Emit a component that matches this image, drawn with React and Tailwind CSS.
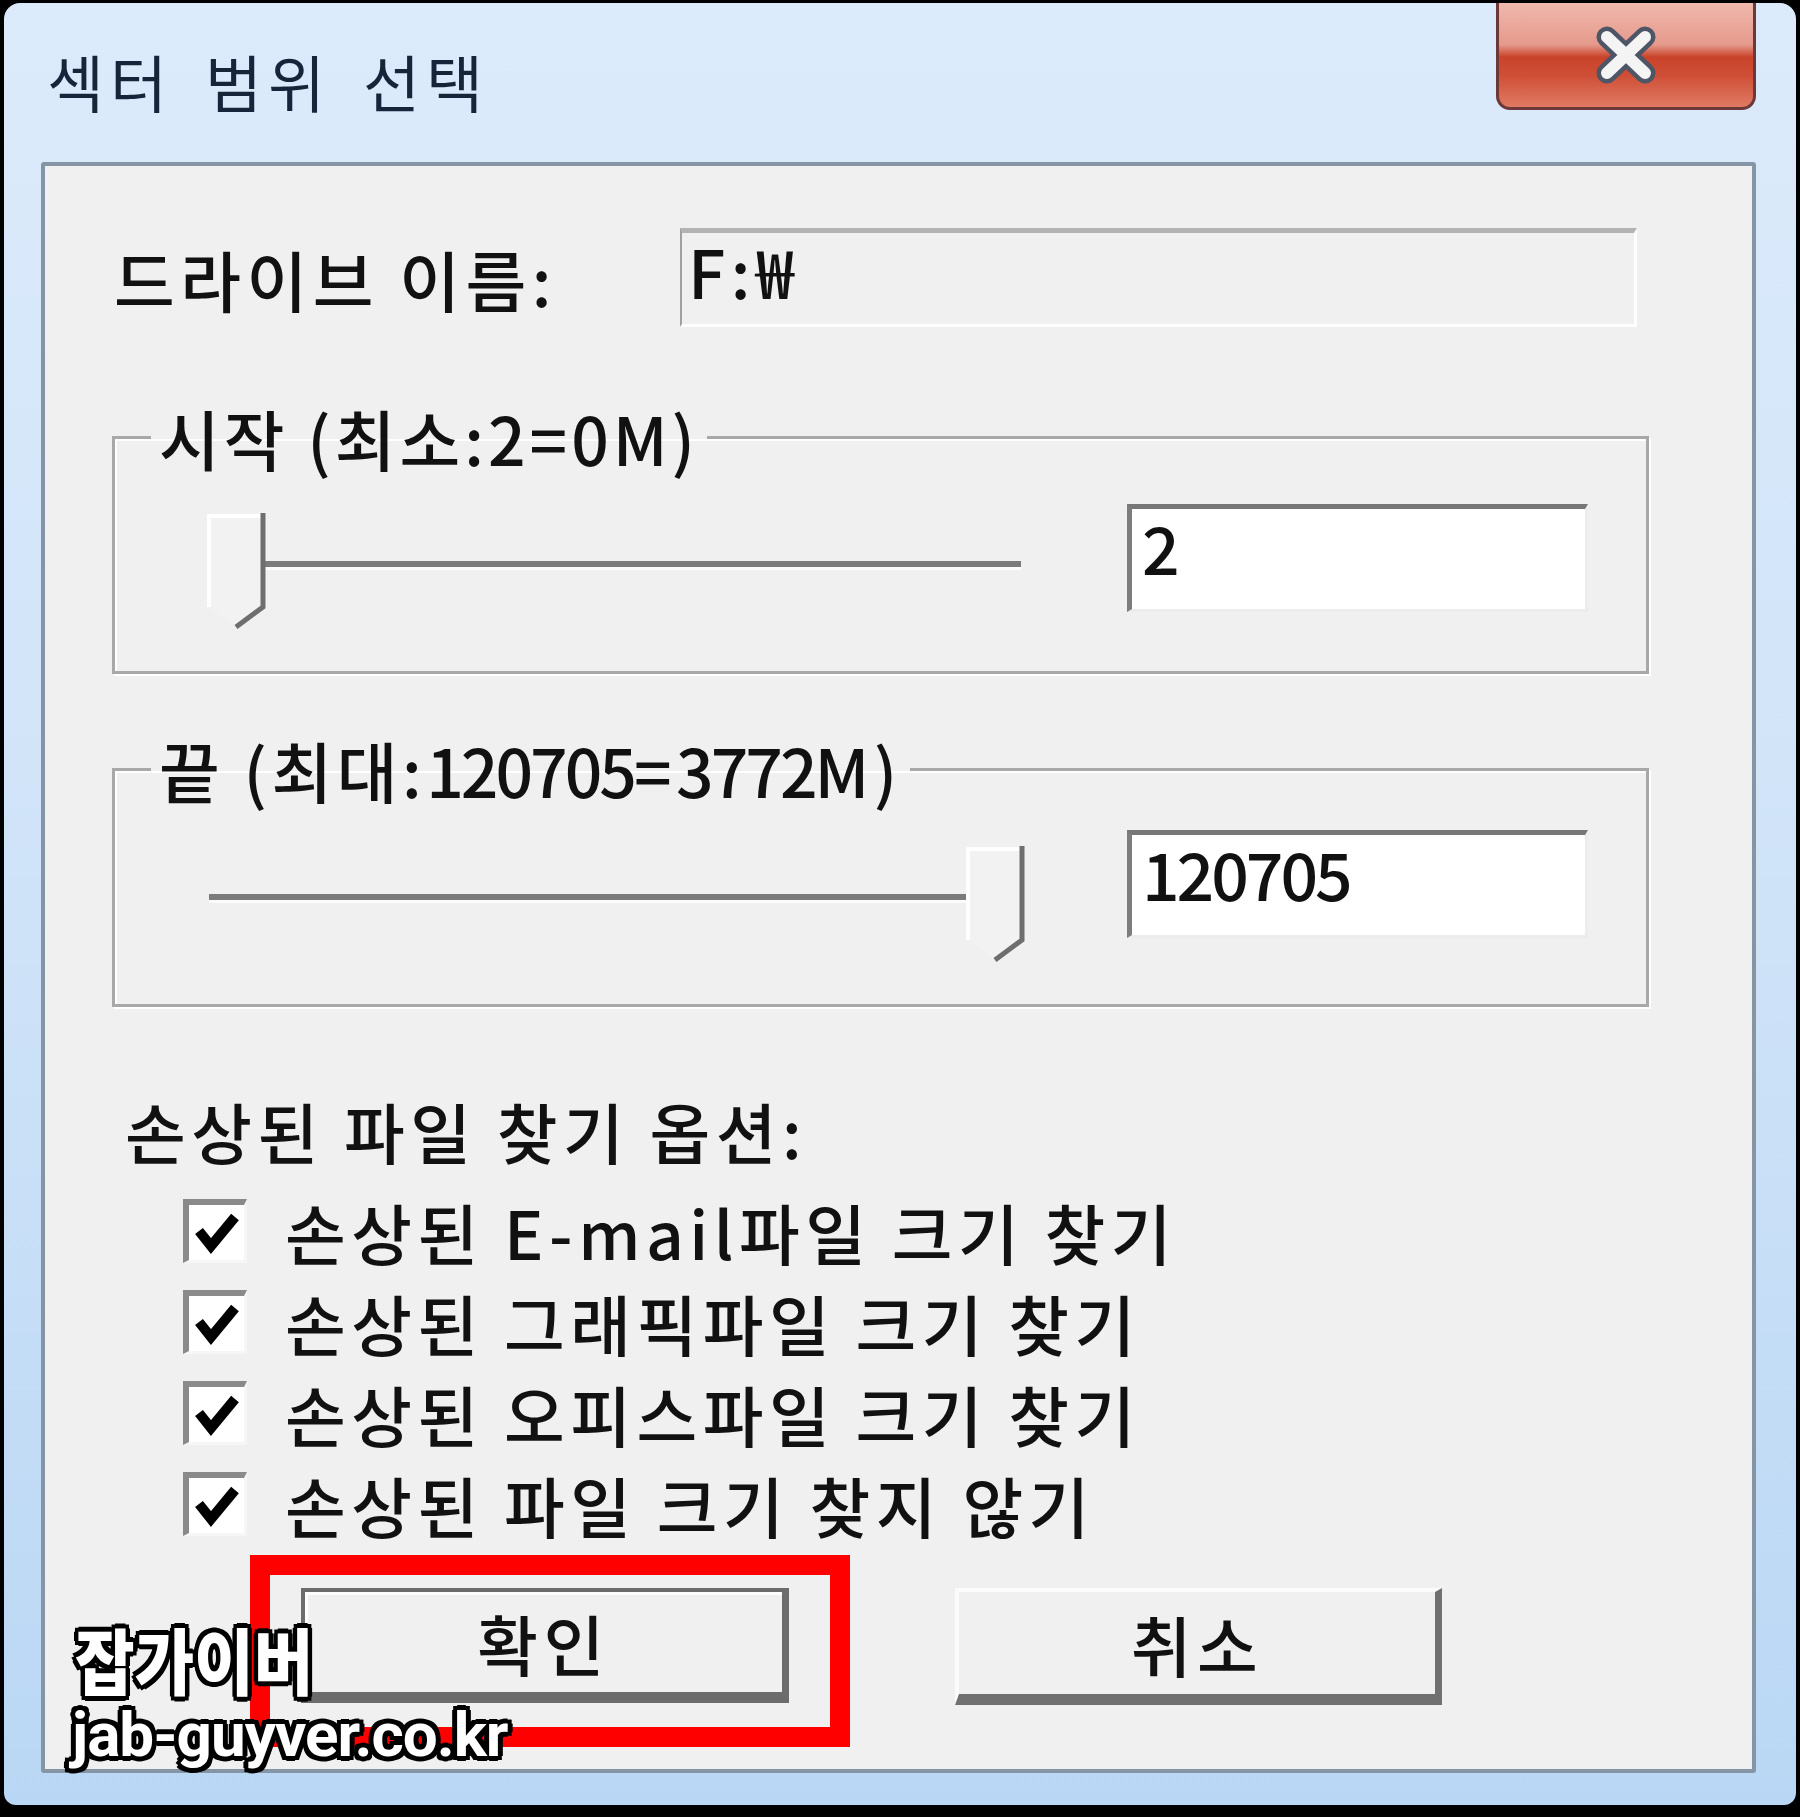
import React from 'react';

// Windows 7 style "섹터 범위 선택" dialog, scaled up

function Num({ children }) {
    return <span className="tracking-[-3px]">{children}</span>;
}

function Slider({ thumbClass }) {
    return (
        <div className="relative w-[820px] h-[116px] shrink-0">
            <div className="absolute left-[3px] top-[48px] w-[812px] h-[6px] bg-[#7b7b7b] shadow-[0_3px_0_#fbfbfb]" />
            <svg className={`absolute top-0 ${thumbClass}`} width="62" height="116" viewBox="0 0 62 116">
                <polygon points="3,3 57,3 57,94 30,113 3,94" fill="#f2f2f2" />
                <polyline points="3,94 3,3 57,3" fill="none" stroke="#ffffff" strokeWidth="4" />
                <polyline points="57,0 57,94 30,114" fill="none" stroke="#6e6e6e" strokeWidth="5" />
            </svg>
        </div>
    );
}

function ValueBox({ value }) {
    return (
        <div className="w-[461px] h-[108px] shrink-0 bg-white border-t-[5px] border-l-[5px] border-t-[#777777] border-l-[#7d7d7d] border-r-[3px] border-b-[3px] border-r-[#ececec] border-b-[#ececec] pl-[10px] pt-[2px] leading-[70px] tracking-[-3px]">
            {value}
        </div>
    );
}

function CheckRow({ label }) {
    return (
        <div className="h-[91px] flex items-center">
            <div className="w-[64px] h-[64px] shrink-0 bg-white border-t-[6px] border-l-[6px] border-t-[#8a8a8a] border-l-[#8a8a8a] border-r-[3px] border-b-[3px] border-r-[#f6f6f6] border-b-[#f6f6f6] flex items-center justify-center">
                <svg width="46" height="46" viewBox="0 0 46 46">
                    <path d="M5 22 L17 37 L41 8" fill="none" stroke="#000" strokeWidth="10" strokeLinejoin="miter" />
                </svg>
            </div>
            <span className="ml-[38px] leading-[70px]">{label}</span>
        </div>
    );
}

export default function App() {
    const options = [
        '손상된 E-mail파일 크기 찾기',
        '손상된 그래픽파일 크기 찾기',
        '손상된 오피스파일 크기 찾기',
        '손상된 파일 크기 찾지 않기',
    ];

    return (
        <div className="relative w-[1800px] h-[1817px] bg-black pt-[3px] px-[4px] pb-[12px] font-['Noto_Sans_CJK_KR',sans-serif] text-[#111]">
            <div className="h-full rounded-t-[16px] rounded-b-[12px] bg-gradient-to-b from-[#dcebfb] via-[#cfe3f8] to-[#b9d7f4] flex flex-col pl-[37px] pr-[40px] pb-[32px]">
                {/* title bar */}
                <div className="h-[159px] shrink-0 flex items-start justify-between">
                    <div className="mt-[47px] ml-[6px] text-[62px] leading-[62px] text-[#17253a] tracking-[6px] [word-spacing:12px]">
                        섹터 범위 선택
                    </div>
                    <div className="relative w-[260px] h-[107px] rounded-b-[14px] border-[3px] border-t-0 border-[#6b3a38] bg-[linear-gradient(to_bottom,#f0b8ac_0%,#e59a8c_40%,#c9432b_52%,#cf4f36_70%,#e07a64_100%)] flex items-center justify-center">
                        <svg width="70" height="60" viewBox="0 0 70 60">
                            <path d="M16 12 L54 48 M54 12 L16 48" stroke="#4d5566" strokeWidth="21" strokeLinecap="round" />
                            <path d="M16 12 L54 48 M54 12 L16 48" stroke="#f4f4f4" strokeWidth="12" strokeLinecap="round" />
                        </svg>
                    </div>
                </div>

                {/* client area */}
                <div className="flex-1 border-[4px] border-[#8595a6] rounded-[3px] bg-[#f0f0f0] flex flex-col text-[66px] font-medium tracking-[5.5px]">
                    {/* drive name */}
                    <div className="mt-[62px] flex items-start">
                        <div className="w-[635px] pl-[69px] h-[99px] flex items-center leading-[70px] shrink-0">
                            드라이브 이름:
                        </div>
                        <div className="w-[957px] h-[99px] border-t-[5px] border-t-[#b3b3b3] border-l-[2px] border-l-[#a0a0a0] border-r-[3px] border-b-[3px] border-r-white border-b-white pl-[6px] pt-[2px] leading-[70px]">
                            F:₩
                        </div>
                    </div>

                    {/* start group */}
                    <fieldset className="mt-[75px] ml-[67px] w-[1537px] border-[3px] border-[#a8a8a8] shadow-[inset_2px_2px_0_#fff,2px_2px_0_#fff] pt-[32px] pb-[42px]">
                        <legend className="ml-[36px] px-[8px] leading-[70px] tracking-[4px]">시작 (최소:2=0M)</legend>
                        <div className="flex items-start pl-[91px]">
                            <div className="mt-[9px]">
                                <Slider thumbClass="left-0" />
                            </div>
                            <div className="ml-[101px]">
                                <ValueBox value="2" />
                            </div>
                        </div>
                    </fieldset>

                    {/* end group */}
                    <fieldset className="mt-[60px] ml-[67px] w-[1537px] border-[3px] border-[#a8a8a8] shadow-[inset_2px_2px_0_#fff,2px_2px_0_#fff] pt-[26px] pb-[42px]">
                        <legend className="ml-[36px] px-[8px] leading-[70px] tracking-[4.5px]">
                            끝 (최대:<Num>120705</Num>=<Num>3772</Num>M)
                        </legend>
                        <div className="flex items-start pl-[91px]">
                            <div className="mt-[16px]">
                                <Slider thumbClass="left-[759px]" />
                            </div>
                            <div className="ml-[101px]">
                                <ValueBox value="120705" />
                            </div>
                        </div>
                    </fieldset>

                    {/* options */}
                    <div className="mt-[88px] pl-[80px] leading-[70px]">손상된 파일 찾기 옵션:</div>
                    <div className="mt-[20px] pl-[138px] flex flex-col">
                        {options.map((o) => (
                            <CheckRow key={o} label={o} />
                        ))}
                    </div>

                    {/* buttons */}
                    <div className="mt-[39px] pl-[256px] flex">
                        <button className="w-[488px] h-[115px] bg-[#f0f0f0] border-[4px] border-[#6c6c6c] border-r-[7px] border-b-[11px] shadow-[inset_3px_3px_0_#fdfdfd] flex items-center justify-center leading-[70px]">
                            확인
                        </button>
                        <button className="ml-[166px] w-[487px] h-[117px] bg-[#f0f0f0] border-t-[4px] border-l-[4px] border-t-[#fbfbfb] border-l-[#fbfbfb] border-r-[7px] border-b-[11px] border-r-[#707070] border-b-[#707070] flex items-center justify-center leading-[70px]">
                            취소
                        </button>
                    </div>
                </div>
            </div>

            {/* red highlight around 확인 */}
            <div className="absolute left-[250px] top-[1555px] w-[600px] h-[192px] border-[20px] border-[#ff0000]" />

            {/* watermark */}
            <div className="absolute left-[75px] top-[1626px] text-[72px] leading-[64px] font-black text-white scale-x-[0.9] origin-left [text-shadow:-4px_-4px_0_#000,4px_-4px_0_#000,-4px_4px_0_#000,4px_4px_0_#000,0_-5px_0_#000,0_5px_0_#000,-5px_0_0_#000,5px_0_0_#000]">
                잡가이버
            </div>
            <div className="absolute left-[72px] top-[1705px] text-[62px] leading-[60px] font-bold text-white font-['Roboto',sans-serif] tracking-[-1px] [text-shadow:-4px_-4px_0_#000,4px_-4px_0_#000,-4px_4px_0_#000,4px_4px_0_#000,0_-5px_0_#000,0_5px_0_#000,-5px_0_0_#000,5px_0_0_#000]">
                jab-guyver.co.kr
            </div>
        </div>
    );
}
